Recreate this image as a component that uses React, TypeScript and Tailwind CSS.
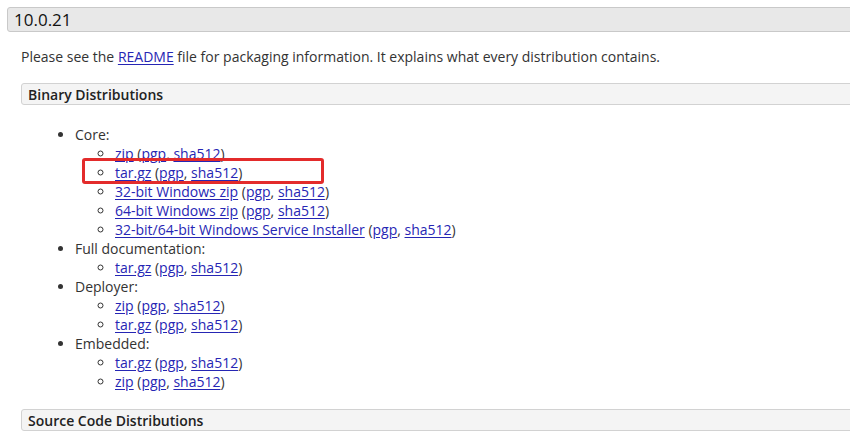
import React from 'react';

interface Download {
  label: string;
}

interface Section {
  name: string;
  items: Download[];
}

const binary: Section[] = [
  {
    name: 'Core:',
    items: [
      { label: 'zip' },
      { label: 'tar.gz' },
      { label: '32-bit Windows zip' },
      { label: '64-bit Windows zip' },
      { label: '32-bit/64-bit Windows Service Installer' },
    ],
  },
  { name: 'Full documentation:', items: [{ label: 'tar.gz' }] },
  { name: 'Deployer:', items: [{ label: 'zip' }, { label: 'tar.gz' }] },
  { name: 'Embedded:', items: [{ label: 'tar.gz' }, { label: 'zip' }] },
];

const A = ({ children }: { children: React.ReactNode }) => (
  <a href="#" className="text-[#2626b4] underline underline-offset-[2px]">
    {children}
  </a>
);

const SubHeader = ({ title }: { title: string }) => (
  <div className="ml-[21px] mr-[-20px] h-[22px] flex items-center px-[6px] bg-[#f4f4f4] border border-[#d2d2d2] rounded-[3px] text-[14px] font-semibold text-[#222]">
    {title}
  </div>
);

export default function App() {
  return (
    <div
      className="relative w-[850px] h-[435px] overflow-hidden bg-white text-[14px] leading-[19px] text-[#333]"
      style={{ fontFamily: '"Open Sans", "Noto Sans", sans-serif' }}
    >
      {/* Version header */}
      <div className="mt-[7px] ml-[7px] mr-[-20px] h-[25px] flex items-center px-[6px] bg-[#e8e8e8] border border-[#c9c9c9] rounded-[3px] text-[17px] text-[#111]">
        10.0.21
      </div>

      <p className="ml-[21px] mt-[15px] mb-[17px]">
        Please see the <A>README</A> file for packaging information. It explains what every distribution contains.
      </p>

      <SubHeader title="Binary Distributions" />

      <ul className="list-disc ml-[75px] mt-[20px] mb-[18px]">
        {binary.map((s) => (
          <li key={s.name}>
            {s.name}
            <ul className="list-[circle] pl-[40px]">
              {s.items.map((d, i) => (
                <li key={i}>
                  <A>{d.label}</A> (<A>pgp</A>, <A>sha512</A>)
                </li>
              ))}
            </ul>
          </li>
        ))}
      </ul>

      <SubHeader title="Source Code Distributions" />

      {/* Annotation */}
      <div className="absolute left-[82px] top-[158px] w-[242px] h-[26px] border-[3px] border-[#e32b2b] rounded-[3px]" />
    </div>
  );
}
